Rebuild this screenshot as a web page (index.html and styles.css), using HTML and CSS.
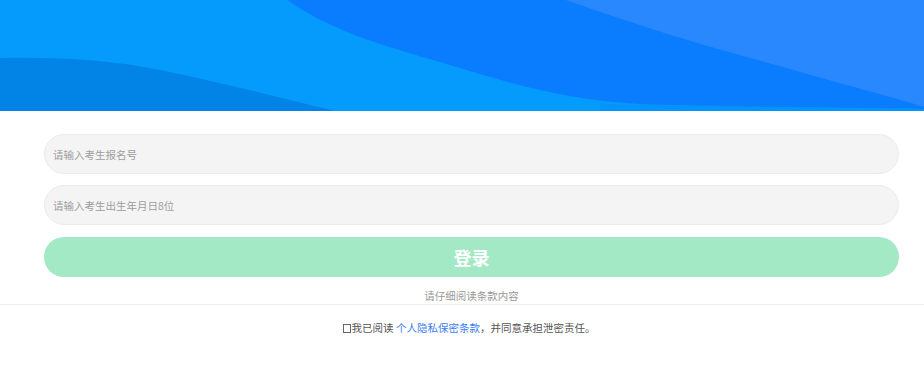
FILE: index.html
```html
<!DOCTYPE html>
<html lang="zh-CN">
<head>
  <meta charset="UTF-8">
  <meta name="viewport" content="width=device-width, initial-scale=1.0">
  <title>考生登录</title>
  <link rel="stylesheet" href="styles.css">
</head>
<body>
  <div class="banner">
    <svg viewBox="0 0 924 111" preserveAspectRatio="none" width="924" height="111">
      <rect width="924" height="111" fill="#049bfd"/>
      <path d="M287 0 C330 30 380 45 440 62 C500 80 560 100 640 104 C760 108 860 108 924 109 L924 0 Z" fill="#0a7dff"/>
      <path d="M566 0 C650 30 720 50 780 66 C840 84 890 96 924 107 L924 0 Z" fill="#2a88ff"/>
      <path d="M0 58 C60 57 110 60 160 70 C220 82 280 98 335 111 L0 111 Z" fill="#0283e6"/>
      <path d="M600 104 C700 106 820 106 924 109 L924 111 L600 111 Z" fill="#0790ff" opacity="0.6"/>
    </svg>
  </div>

  <div class="form">
    <input class="field" type="text" placeholder="请输入考生报名号">
    <input class="field" type="text" placeholder="请输入考生出生年月日8位">
    <button class="login-btn">登录</button>
    <p class="tip">请仔细阅读条款内容</p>
  </div>

  <div class="agree">
    <span class="box"></span>我已阅读 <a href="#">个人隐私保密条款</a>，并同意承担泄密责任。
  </div>
</body>
</html>
```

FILE: styles.css
```css
body {
  margin: 0;
  padding: 0;
  background-color: #ffffff;
  font-family: "Noto Sans CJK SC", "Microsoft YaHei", sans-serif;
}
.banner {
  height: 111px;
  overflow: hidden;
}
.banner svg {
  display: block;
}
.form {
  margin: 0 25px 0 44px;
  padding-top: 23px;
  display: flex;
  flex-direction: column;
}
.field {
  box-sizing: border-box;
  height: 40px;
  margin: 0 0 11px;
  padding: 0 8px;
  border: 1px solid #ebebeb;
  border-radius: 20px;
  background-color: #f4f4f4;
  font-family: inherit;
  font-size: 10.5px;
  color: #333;
  outline: none;
}
.field::placeholder {
  color: #9d9d9d;
}
.login-btn {
  height: 40px;
  margin-top: 1px;
  border: none;
  border-radius: 20px;
  background-color: #a3e9c5;
  color: #ffffff;
  font-family: inherit;
  font-size: 18px;
  font-weight: bold;
  cursor: pointer;
}
.tip {
  margin: 11px 0 0;
  text-align: center;
  font-size: 10.5px;
  line-height: 16px;
  color: #999999;
}
.agree {
  border-top: 1px solid #eeeeee;
  padding: 15px 0 0 14px;
  text-align: center;
  font-size: 10.5px;
  line-height: 16px;
  color: #555555;
}
.agree a {
  color: #3b7cf7;
  text-decoration: none;
}
.box {
  display: inline-block;
  width: 6px;
  height: 7px;
  border: 1px solid #666;
  margin-right: 1px;
  vertical-align: -1px;
}
```
